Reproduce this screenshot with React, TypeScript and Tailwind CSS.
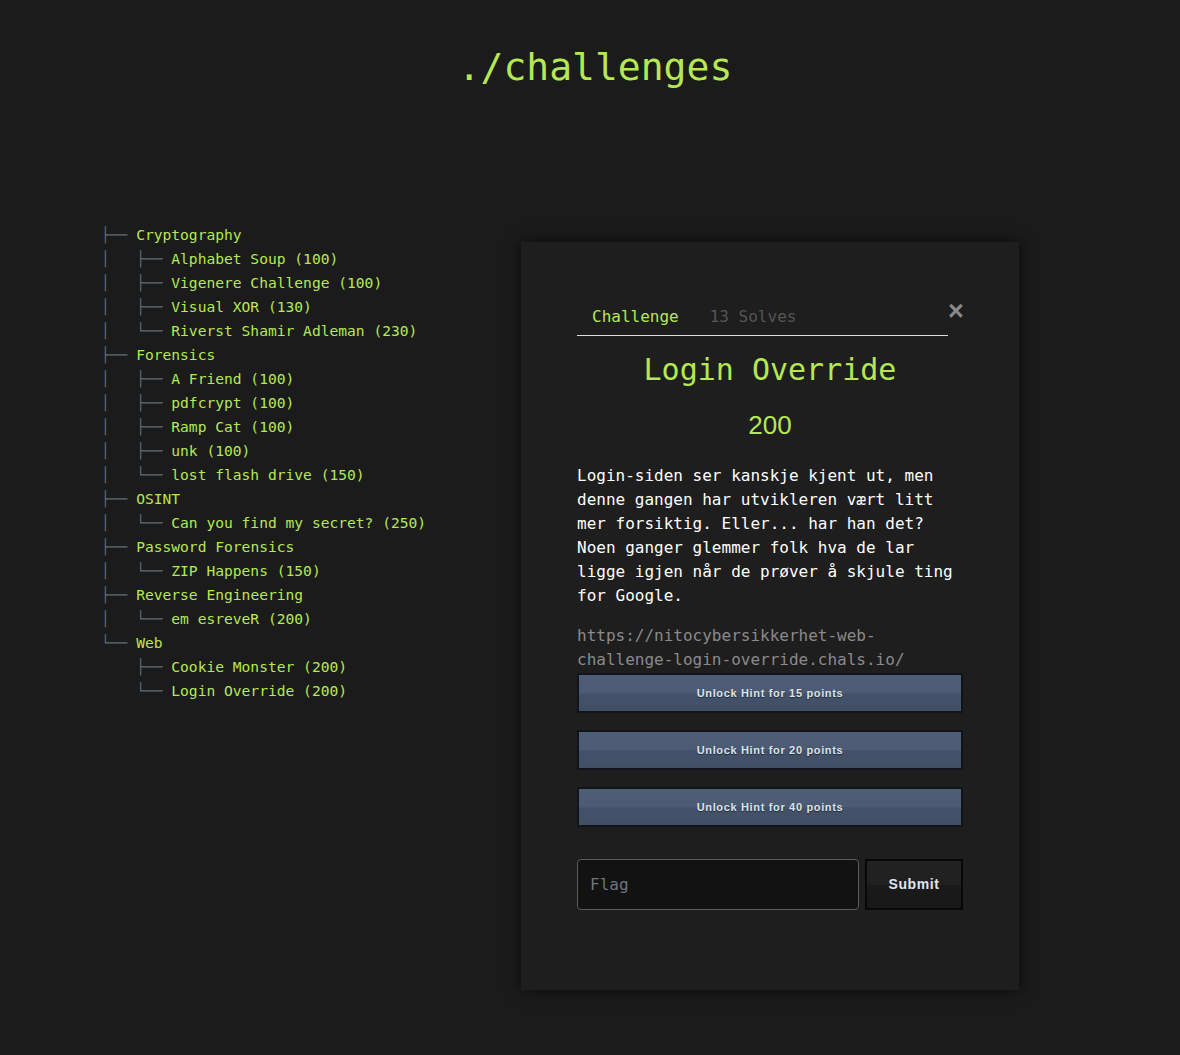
import React from "react";

type Row = { prefix: string; text: string };

const rows: Row[] = [
  { prefix: "├── ", text: "Cryptography" },
  { prefix: "│   ├── ", text: "Alphabet Soup (100)" },
  { prefix: "│   ├── ", text: "Vigenere Challenge (100)" },
  { prefix: "│   ├── ", text: "Visual XOR (130)" },
  { prefix: "│   └── ", text: "Riverst Shamir Adleman (230)" },
  { prefix: "├── ", text: "Forensics" },
  { prefix: "│   ├── ", text: "A Friend (100)" },
  { prefix: "│   ├── ", text: "pdfcrypt (100)" },
  { prefix: "│   ├── ", text: "Ramp Cat (100)" },
  { prefix: "│   ├── ", text: "unk (100)" },
  { prefix: "│   └── ", text: "lost flash drive (150)" },
  { prefix: "├── ", text: "OSINT" },
  { prefix: "│   └── ", text: "Can you find my secret? (250)" },
  { prefix: "├── ", text: "Password Forensics" },
  { prefix: "│   └── ", text: "ZIP Happens (150)" },
  { prefix: "├── ", text: "Reverse Engineering" },
  { prefix: "│   └── ", text: "em esreveR (200)" },
  { prefix: "└── ", text: "Web" },
  { prefix: "    ├── ", text: "Cookie Monster (200)" },
  { prefix: "    └── ", text: "Login Override (200)" },
];

const mono = "font-['DejaVu_Sans_Mono','Liberation_Mono',monospace]";

function HintButton({ pts }: { pts: number }) {
  return (
    <button className="w-full h-[40px] border-2 border-[#111418] bg-[linear-gradient(to_bottom,#4f5e77_0%,#4c5b73_50%,#43526a_52%,#414f66_100%)] text-[#dde3ea] text-[11px] font-bold tracking-[0.06em] font-['Liberation_Sans',Arial,sans-serif] [text-shadow:0_1px_1px_rgba(0,0,0,0.5)]">
      Unlock Hint for {pts} points
    </button>
  );
}

export default function App() {
  return (
    <div className={`min-h-[1055px] w-full bg-[#1b1b1b] ${mono}`}>
      <h1 className="pt-[45px] pl-[10px] text-center text-[38px] leading-[44px] text-[#b5e853] font-normal">
        ./challenges
      </h1>
      <div className="mt-[134px] flex items-start">
        <div className="w-[521px] pl-[101px] text-[14.6px] leading-[24px]">
          {rows.map((r, i) => (
            <div key={i} className="whitespace-pre">
              <span className="text-[#5f6b77]">{r.prefix}</span>
              <span className="text-[#b5e853]">{r.text}</span>
            </div>
          ))}
        </div>
        <div className="mt-[19px] w-[498px] h-[748px] bg-[#1e1e1e] shadow-[0_0_14px_rgba(0,0,0,0.65)] pt-[55px] px-[56px]">
          <div className="flex items-start">
            <div className="flex-1 flex border-b border-[#dddddd] text-[16px] leading-[24px]">
              <div className="px-[15px] pt-2 pb-[6px] text-[#b5e853]">Challenge</div>
              <div className="px-[16px] pt-2 pb-[6px] text-[#555555]">13 Solves</div>
            </div>
            <div className="w-[15px] text-right text-[#8a8a8a] text-[27px] leading-[24px] font-bold font-['Liberation_Sans',Arial,sans-serif] mt-[2px]">
              ×
            </div>
          </div>
          <div className="mt-[16px] text-center text-[30px] leading-[36px] text-[#b5e853]">
            Login Override
          </div>
          <div className="mt-[21px] text-center text-[26px] leading-[32px] text-[#b5e853] font-['Liberation_Sans','DejaVu_Sans',sans-serif]">
            200
          </div>
          <p className="mt-[23px] text-[16px] leading-[24px] text-white whitespace-pre">
            {"Login-siden ser kanskje kjent ut, men\ndenne gangen har utvikleren vært litt\nmer forsiktig. Eller... har han det?\nNoen ganger glemmer folk hva de lar\nligge igjen når de prøver å skjule ting\nfor Google."}
          </p>
          <p className="mt-[16px] text-[16px] leading-[24px] text-[#8a8a8a] whitespace-pre">
            {"https://nitocybersikkerhet-web-\nchallenge-login-override.chals.io/"}
          </p>
          <div className="mt-[1px] flex flex-col gap-[17px]">
            <HintButton pts={15} />
            <HintButton pts={20} />
            <HintButton pts={40} />
          </div>
          <div className="mt-[32px] flex gap-[6px]">
            <input
              placeholder="Flag"
              className="w-[282px] h-[51px] rounded-[4px] border border-[#5a5a5a] bg-[#121212] px-3 text-[16px] text-white placeholder:text-[#6b7580] outline-none"
            />
            <button className="flex-1 h-[51px] border-2 border-[#080808] bg-[linear-gradient(to_bottom,#222222_0%,#202020_50%,#1a1a1a_52%,#181818_100%)] text-[#dfe6ee] text-[14px] font-bold tracking-[0.04em] font-['Liberation_Sans',Arial,sans-serif]">
              Submit
            </button>
          </div>
        </div>
      </div>
    </div>
  );
}
